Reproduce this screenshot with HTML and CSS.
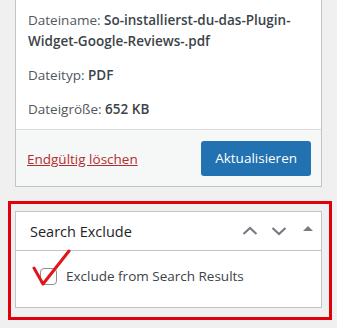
FILE: index.html
```html
<!DOCTYPE html>
<html lang="de">

<head>
    <meta charset="UTF-8" />
    <meta name="viewport" content="width=device-width, initial-scale=1.0" />
    <title>Anhang bearbeiten</title>
    <link rel="stylesheet" href="styles.css">
</head>

<body>
    <div class="sidebar">
        <!-- Publish box of the attachment -->
        <div class="postbox submitbox">
            <div class="misc-info">
                <p class="info-row">Dateiname: <strong>So-installierst-du-das-Plugin-<br>Widget-Google-Reviews-.pdf</strong></p>
                <p class="info-row">Dateityp: <strong>PDF</strong></p>
                <p class="info-row">Dateigröße: <strong>652 KB</strong></p>
            </div>
            <div class="major-actions">
                <a href="#" class="delete-link">Endgültig löschen</a>
                <button type="button" class="button-primary">Aktualisieren</button>
            </div>
        </div>

        <!-- Highlighted plugin box -->
        <div class="highlight">
            <div class="postbox">
                <div class="postbox-header">
                    <h2 class="postbox-title">Search Exclude</h2>
                    <div class="handle-actions">
                        <button type="button" class="handle" aria-label="Nach oben verschieben">
                            <svg width="16" height="16" viewBox="0 0 16 16" aria-hidden="true">
                                <path d="M1.5 11 L8 5 L14.5 11" fill="none" stroke="#787c82" stroke-width="2.2" />
                            </svg>
                        </button>
                        <button type="button" class="handle" aria-label="Nach unten verschieben">
                            <svg width="16" height="16" viewBox="0 0 16 16" aria-hidden="true">
                                <path d="M1.5 5 L8 11 L14.5 5" fill="none" stroke="#787c82" stroke-width="2.2" />
                            </svg>
                        </button>
                        <button type="button" class="handle toggle" aria-label="Bedienfeld umschalten">
                            <svg width="10" height="8" viewBox="0 0 10 8" aria-hidden="true">
                                <path d="M0 6 L5 1 L10 6 Z" fill="#787c82" />
                            </svg>
                        </button>
                    </div>
                </div>
                <div class="inside">
                    <label class="check-label">
                        <span class="checkbox"></span>
                        Exclude from Search Results
                    </label>
                </div>
            </div>
            <!-- red tick drawn over the checkbox -->
            <svg class="tick" width="44" height="40" viewBox="0 0 44 40" aria-hidden="true">
                <path d="M3 19 L12 35 L38 2" fill="none" stroke="#e0161b" stroke-width="3" stroke-linejoin="round" stroke-linecap="round" />
            </svg>
        </div>
    </div>
</body>

</html>
```

FILE: styles.css
```css
:root {
    --color-bg: rgb(240, 240, 241);
    --color-border: rgb(195, 196, 199);
    --color-text: rgb(29, 35, 39);
    --color-label: rgb(60, 67, 74);
    --color-muted: rgb(80, 87, 94);
    --color-red: rgb(224, 0, 10);
}

* {
    box-sizing: border-box;
}

body {
    margin: 0;
    background: var(--color-bg);
    font-family: "Open Sans", "Noto Sans", sans-serif;
    font-size: 13.5px;
    color: var(--color-label);
}

.sidebar {
    width: 324px;
    margin-left: 8px;
}

.postbox {
    background: #fff;
    border: 1px solid var(--color-border);
}

.submitbox {
    margin: 0 10px 0 7px;
    border-top: none;
}

/* Info rows */
.misc-info {
    padding: 10px 12px 9px 12px;
}

.info-row {
    margin: 0 0 13px;
    line-height: 21px;
    color: var(--color-muted);
}

.info-row:last-child {
    margin-bottom: 0;
}

.info-row strong {
    font-weight: 600;
    color: var(--color-label);
}

/* Footer with actions */
.major-actions {
    display: flex;
    align-items: center;
    justify-content: space-between;
    padding: 11px 10px 10px 11px;
    background: rgb(246, 247, 247);
    border-top: 1px solid rgb(220, 220, 222);
}

.delete-link {
    color: rgb(179, 45, 46);
    text-decoration: underline;
}

.button-primary {
    all: unset;
    height: 35px;
    padding: 0 14px;
    line-height: 35px;
    background: rgb(34, 113, 177);
    color: #fff;
    border-radius: 3px;
    font-size: 13.5px;
}

/* Red highlight frame */
.highlight {
    position: relative;
    margin-top: 14px;
    border: 3px solid var(--color-red);
    padding: 7px 7px 9px 4px;
}

.postbox-header {
    display: flex;
    align-items: center;
    justify-content: space-between;
    height: 39px;
    border-bottom: 1px solid var(--color-border);
    padding: 0 8px 0 14px;
}

.postbox-title {
    margin: 0;
    font-size: 14.5px;
    font-weight: 400;
    color: var(--color-text);
}

.handle-actions {
    display: flex;
    align-items: center;
    gap: 13px;
}

.handle {
    all: unset;
    display: flex;
}

.toggle {
    margin-left: 3px;
    margin-top: -4px;
}

.inside {
    height: 56px;
    padding: 16px 12px 0 24px;
}

.check-label {
    display: flex;
    align-items: center;
    gap: 9px;
    color: var(--color-label);
}

.checkbox {
    width: 17px;
    height: 17px;
    border: 1px solid rgb(140, 143, 148);
    border-radius: 4px;
    background: #fff;
}

.tick {
    position: absolute;
    left: 20px;
    top: 45px;
}
```
